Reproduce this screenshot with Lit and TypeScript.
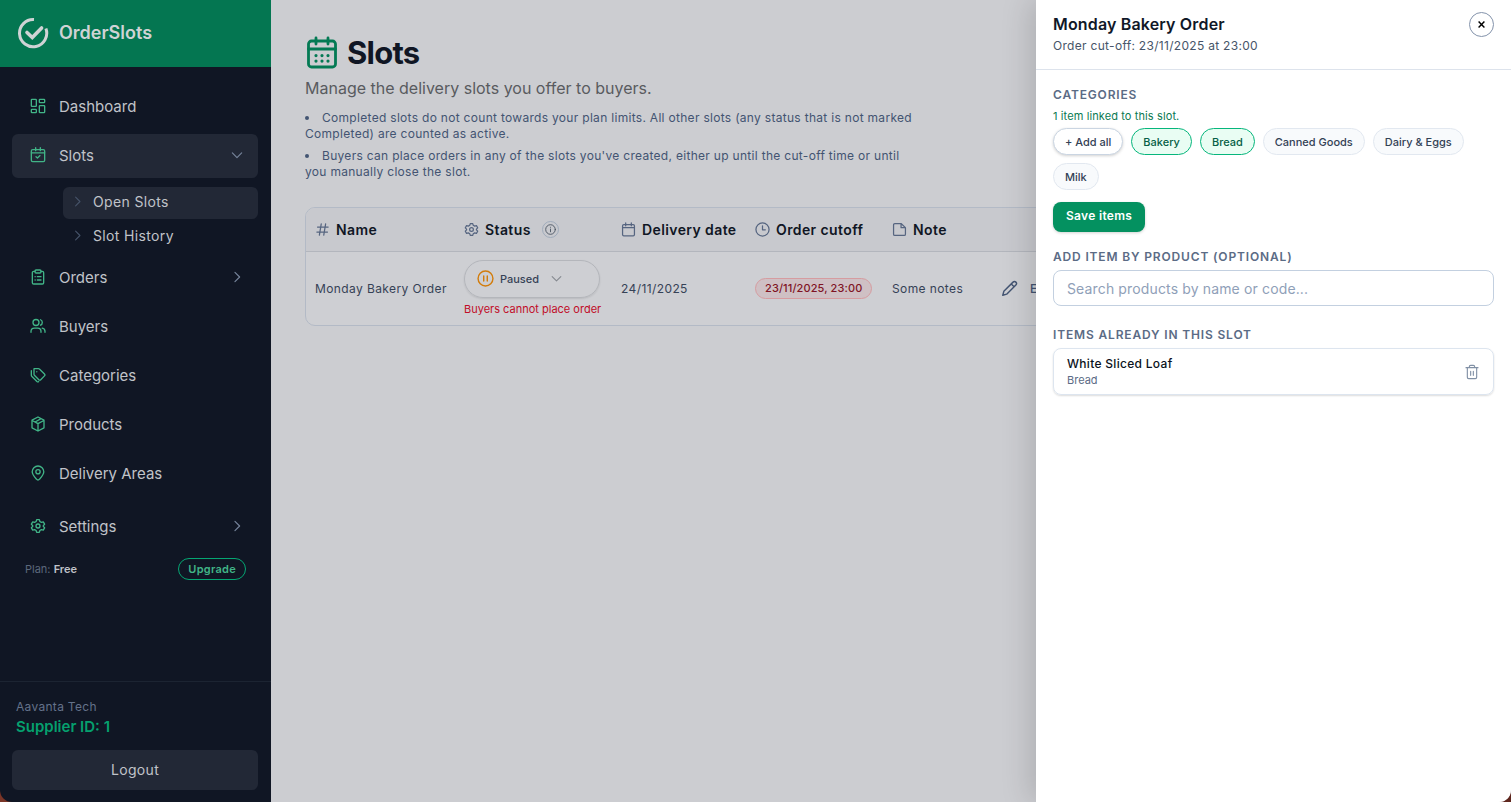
import { LitElement, html, css, svg, TemplateResult, SVGTemplateResult } from "lit";
import { customElement, state } from "lit/decorators.js";
import { classMap } from "lit/directives/class-map.js";

const icon = (box: string, cls: string, body: SVGTemplateResult): TemplateResult =>
  html`<svg class="icon ${cls}" viewBox=${box} aria-hidden="true">${body}</svg>`;

const GEAR = svg`<path d="M10 2.5h4l.8 2.8 2.3 1.3 2.8-.8 2 3.5-2 2.1v1.2l2 2.1-2 3.5-2.8-.8-2.3 1.3-.8 2.8h-4l-.8-2.8-2.3-1.3-2.8.8-2-3.5 2-2.1v-1.2l-2-2.1 2-3.5 2.8.8 2.3-1.3z"/><circle cx="12" cy="12" r="3"/>`;

const icons = {
  dashboard: svg`<rect x="2" y="2" width="7.5" height="10.5" rx="1"/><rect x="2" y="17" width="7.5" height="5" rx="1"/><rect x="14" y="2" width="8" height="5" rx="1"/><rect x="14" y="11.5" width="8" height="10.5" rx="1"/>`,
  slots: svg`<rect x="2" y="4" width="20" height="18" rx="2"/><path d="M2 8.8h20M8.5 1v4.5M15.5 1v4.5M9 14.5l2.2 2 3.8-3.6"/>`,
  orders: svg`<path d="M7.5 3.5H5.500a2 2 0 0 0-2 2v15a2 2 0 0 0 2 2h13a2 2 0 0 0 2-2v-15a2 2 0 0 0-2-2h-2"/><rect x="7.5" y="1.5" width="9" height="4.5" rx="1.6"/><path d="M7.600 11.500h.2M11 11.500h5.500M7.600 16.500h.2M11 16.500h5.500"/>`,
  buyers: svg`<circle cx="9" cy="6.700" r="4.500"/><path d="M1.500 21.500v-1.300a5 5 0 0 1 5-5h5a5 5 0 0 1 5 5v1.300M15.800 2.600a4.500 4.500 0 0 1 0 8.200M18.300 15.200a5 5 0 0 1 4.200 5v1.300"/>`,
  categories: svg`<path d="M6.200 2.500h6.500a2 2 0 0 1 1.400.6l7.600 7.400a2 2 0 0 1 0 2.800l-5.600 5.700a2 2 0 0 1-2.900 0l-6.600-6.600a2 2 0 0 1-.6-1.400V2.700z"/><path d="M2 5.500v6.700a3 3 0 0 0 .9 2.100l7.500 7.400a2.500 2.500 0 0 0 2.600.4M10.200 7v.1"/>`,
  products: svg`<path d="M12 1.500l9 4.800v11.400l-9 4.800-9-4.800V6.300zM3.300 6.700L12 11.500l8.700-4.800M12 11.500v11M16.600 4l-9 5"/>`,
  areas: svg`<path d="M12 22.500c-1 0-1.700-.6-2.300-1.300C6.600 17.800 3.300 14.300 3.300 10.200a8.700 8.700 0 0 1 17.400 0c0 4.100-3.300 7.600-6.400 11-.6.700-1.300 1.300-2.300 1.300z"/><circle cx="12" cy="10.200" r="3.200"/>`,
  settings: GEAR,
  down: svg`<path d="M4 8.500l8 8 8-8"/>`,
  right: svg`<path d="M8.500 4l8 8-8 8"/>`,
};

interface NavItem {
  label: string;
  icon: keyof typeof icons;
  arrow?: "down" | "right";
  children?: string[];
  spaced?: boolean;
}

const NAV: NavItem[] = [
  { label: "Dashboard", icon: "dashboard" },
  { label: "Slots", icon: "slots", arrow: "down", children: ["Open Slots", "Slot History"] },
  { label: "Orders", icon: "orders", arrow: "right" },
  { label: "Buyers", icon: "buyers" },
  { label: "Categories", icon: "categories" },
  { label: "Products", icon: "products" },
  { label: "Delivery Areas", icon: "areas" },
  { label: "Settings", icon: "settings", arrow: "right", spaced: true },
];

const shared = css`
  * { box-sizing: border-box; }
  h1, h2, h3, p, ul { margin: 0; padding: 0; }
  a { color: inherit; text-decoration: none; }
  button, input, select { font: inherit; color: inherit; margin: 0; }
  button { cursor: pointer; }
  .icon {
    display: block;
    flex: none;
    width: 16px;
    height: 16px;
    fill: none;
    stroke: currentColor;
    stroke-width: 2;
    stroke-linecap: round;
    stroke-linejoin: round;
  }
`;

@customElement("side-nav")
class SideNav extends LitElement {
  static styles = [shared, css`
    :host {
      display: flex;
      flex-direction: column;
      background: #101624;
      color: #c0c3c9;
    }
    .brand {
      display: flex;
      align-items: center;
      gap: 10px;
      height: 67px;
      padding: 0 17px 2px;
      background: #047651;
      color: #cfd3d5;
      font-size: 18px;
      font-weight: 600;
    }
    .logo { width: 32px; height: 32px; stroke-width: 3; }
    nav { display: flex; flex-direction: column; gap: 5px; padding: 18px 13px 0 12px; }
    .item {
      display: flex;
      align-items: center;
      gap: 13px;
      height: 44px;
      padding: 0 14px 2px 18px;
      border-radius: 6px;
      font-size: 15px;
    }
    .item .icon { color: #41b487; }
    .item .arrow { width: 14px; height: 14px; margin-left: auto; color: #76849b; }
    .spaced { margin-top: 4px; }
    .active, .sub-active { background: #222836; }
    .sub { display: flex; flex-direction: column; gap: 2px; padding: 4px 0 0 51px; margin-bottom: -2px; }
    .sub-item {
      display: flex;
      align-items: center;
      gap: 9px;
      height: 32px;
      padding: 0 8px 3px;
      border-radius: 6px;
      font-size: 14px;
      letter-spacing: 0.025em;
    }
    .sub-item .icon { width: 13px; height: 13px; color: #465369; }
    .plan {
      display: flex;
      align-items: center;
      justify-content: space-between;
      padding: 9px 25px;
      font-size: 11px;
      color: #5c687c;
    }
    .plan strong { color: #c0c3c9; font-weight: 600; }
    .upgrade {
      height: 22px;
      padding: 0 9px;
      border: 1px solid #05a673;
      border-radius: 11px;
      color: #41b487;
      font-weight: 600;
      letter-spacing: 0.025em;
      line-height: 20px;
    }
    .account { margin-top: auto; padding: 16px 13px 12px 12px; border-top: 1px solid #1c2432; }
    .company { padding-left: 4px; font-size: 12px; line-height: 18px; color: #64728a; letter-spacing: 0.025em; }
    .supplier { padding-left: 4px; font-size: 15px; line-height: 22px; font-weight: 600; color: #05a06e; }
    .logout {
      width: 100%;
      height: 40px;
      margin-top: 12px;
      padding: 0 0 2px;
      border: 0;
      border-radius: 6px;
      background: #222836;
      font-size: 14px;
      letter-spacing: 0.025em;
    }
  `];

  render() {
    return html`
      <div class="brand">
        ${icon("0 0 32 32", "logo", svg`<path d="M17 2.600A13.600 13.600 0 1 0 28.900 11.500" stroke-linecap="butt"/><path d="M10 15.500l5.300 5 9.300-9.500" stroke-width="3.600" stroke-linejoin="miter"/>`)}
        <span>OrderSlots</span>
      </div>
      <nav aria-label="Main">
        ${NAV.map((n) => html`
          <a href="#" class=${classMap({ item: true, active: !!n.children, spaced: !!n.spaced })}>
            ${icon("0 0 24 24", "", icons[n.icon])}
            <span>${n.label}</span>
            ${n.arrow ? icon("0 0 24 24", "arrow", icons[n.arrow]) : ""}
          </a>
          ${n.children ? html`<div class="sub">
            ${n.children.map((c, i) => html`
              <a href="#" class=${classMap({ "sub-item": true, "sub-active": i === 0 })}>
                ${icon("0 0 24 24", "", icons.right)}<span>${c}</span>
              </a>`)}
          </div>` : ""}
        `)}
      </nav>
      <div class="plan"><span>Plan: <strong>Free</strong></span><a class="upgrade" href="#">Upgrade</a></div>
      <div class="account">
        <p class="company">Aavanta Tech</p>
        <p class="supplier">Supplier ID: 1</p>
        <button class="logout">Logout</button>
      </div>
    `;
  }
}

@customElement("slots-page")
class SlotsPage extends LitElement {
  static styles = [shared, css`
    :host { display: block; padding: 35px 34px; background: #cccdd1; min-width: 0; }
    .title { display: flex; align-items: center; gap: 8px; color: #101624; }
    .title .icon { width: 34px; height: 34px; color: #047a54; }
    h1 { font-size: 31px; line-height: 36px; font-weight: 700; letter-spacing: -0.025em; }
    .lead { margin-top: 5px; font-size: 16px; line-height: 24px; color: #595b5f; }
    ul {
      display: flex;
      flex-direction: column;
      gap: 6px;
      max-width: 612px;
      margin-top: 10px;
      list-style-position: inside;
      font-size: 12px;
      line-height: 16px;
      letter-spacing: 0.025em;
      color: #435472;
    }
    .frame { margin-top: 27px; border: 1px solid #b3bac6; border-radius: 10px; overflow: hidden; background: #cecfd3; }
    table { width: 100%; border-collapse: collapse; table-layout: fixed; letter-spacing: 0.025em; }
    th { height: 43px; padding: 0 0 0 9px; background: #c8c9ce; border-bottom: 1px solid #b3b6bd; text-align: left; color: #101624; font-size: 14px; font-weight: 600; white-space: nowrap; }
    td { height: 74px; padding: 0 0 0 9px; font-size: 12px; color: #364256; white-space: nowrap; }
    .head { display: flex; align-items: center; gap: 6px; }
    .head .icon { width: 15px; height: 15px; color: #566580; }
    .info { display: grid; place-items: center; width: 17px; height: 17px; margin-left: 5px; padding: 0; border: 1px solid #a0acbc; border-radius: 50%; background: none; }
    .head .info .icon { width: 11px; height: 11px; color: #4b5563; }
    .c-name { width: 149px; }
    .c-status { width: 157px; }
    .c-date { width: 134px; }
    .c-cutoff { width: 137px; }
    .c-note { width: 109px; }
    .status { display: flex; align-items: center; width: 136px; height: 38px; padding: 0 12px; border: 1px solid #b4b6bb; border-radius: 19px; box-shadow: 0 1px 2px #0000001a; letter-spacing: normal; }
    .status .icon { color: #d27c0c; width: 17px; height: 17px; }
    .status .chev { width: 13px; height: 13px; margin-left: 8px; color: #85898f; }
    select { appearance: none; width: 42px; margin-left: 6px; padding: 0; border: 0; background: none; font-size: 11px; font-weight: 500; }
    .warn { margin-top: 3px; font-size: 11px; line-height: 16px; color: #c10d29; letter-spacing: normal; }
    .due { display: inline-block; padding: 0 9px; border: 1px solid #d69ca0; border-radius: 11px; background: #cfc0c4; color: #7f1424; font-size: 11px; line-height: 19px; font-weight: 500; letter-spacing: 0.01em; }
    .actions { display: flex; align-items: center; }
    .actions button { display: flex; align-items: center; gap: 12px; padding: 0; border: 0; background: none; color: #435472; font-weight: 500; }
    .actions .icon { width: 17px; height: 17px; }
  `];

  private head(label: string, body: SVGTemplateResult, extra: unknown = "") {
    return html`<div class="head">${icon("0 0 24 24", "", body)}<span>${label}</span>${extra}</div>`;
  }

  render() {
    const info = html`<button class="info" aria-label="About status">
      ${icon("0 0 24 24", "", svg`<circle cx="12" cy="12" r="10.500"/><path d="M12 11v6M12 7v.2"/>`)}
    </button>`;
    return html`
      <div class="title">
        ${icon("0 0 34 34", "", svg`<g stroke-width="2.800"><rect x="3.500" y="5" width="27" height="26" rx="3"/><path d="M3.500 13h27M11 2v6M23 2v6"/></g><path d="M11 19.500v.1M17 19.500v.1M23 19.500v.1M11 25v.1M17 25v.1M23 25v.1" stroke-width="3.200"/>`)}
        <h1>Slots</h1>
      </div>
      <p class="lead">Manage the delivery slots you offer to buyers.</p>
      <ul>
        <li>Completed slots do not count towards your plan limits. All other slots (any status that is not marked Completed) are counted as active.</li>
        <li>Buyers can place orders in any of the slots you've created, either up until the cut-off time or until you manually close the slot.</li>
      </ul>
      <div class="frame">
        <table>
          <thead>
            <tr>
              <th class="c-name">${this.head("Name", svg`<path d="M4 8h17M3 16h17M10 3L7 21M17 3l-3 18"/>`)}</th>
              <th class="c-status">${this.head("Status", GEAR, info)}</th>
              <th class="c-date">${this.head("Delivery date", svg`<rect x="2.500" y="4" width="19" height="18" rx="2"/><path d="M2.500 9h19M7.500 1.500V6M16.500 1.500V6"/>`)}</th>
              <th class="c-cutoff">${this.head("Order cutoff", svg`<circle cx="12" cy="12" r="10.500"/><path d="M12 6v6.500h4.500"/>`)}</th>
              <th class="c-note">${this.head("Note", svg`<path d="M14.500 2.500H4.500a2 2 0 0 0-2 2v15a2 2 0 0 0 2 2h15a2 2 0 0 0 2-2V9zM14.500 2.500V9h7"/>`)}</th>
              <th></th>
            </tr>
          </thead>
          <tbody>
            <tr>
              <td>Monday Bakery Order</td>
              <td>
                <div class="status">
                  ${icon("0 0 24 24", "", svg`<circle cx="12" cy="12" r="10.500"/><path d="M9.500 8.500v7M14.500 8.500v7"/>`)}
                  <select aria-label="Slot status"><option>Paused</option><option>Open</option><option>Completed</option></select>
                  ${icon("0 0 24 24", "chev", icons.down)}
                </div>
                <p class="warn">Buyers cannot place order</p>
              </td>
              <td>24/11/2025</td>
              <td><span class="due">23/11/2025, 23:00</span></td>
              <td>Some notes</td>
              <td>
                <div class="actions">
                  <button>
                    ${icon("0 0 24 24", "", svg`<path d="M17 3a2.800 2.800 0 0 1 4 4L8 20l-5.500 1.500L4 16zM14.500 5.500l4 4"/>`)}
                    <span>Edit</span>
                  </button>
                </div>
              </td>
            </tr>
          </tbody>
        </table>
      </div>
    `;
  }
}

@customElement("slot-drawer")
class SlotDrawer extends LitElement {
  @state() private selected = ["Bakery", "Bread"];
  private categories = ["Bakery", "Bread", "Canned Goods", "Dairy & Eggs", "Milk"];

  static styles = [shared, css`
    :host { display: block; background: #fff; color: #101828; box-shadow: -6px 0 28px #00000026; }
    header { display: flex; justify-content: space-between; align-items: flex-start; padding: 12px 17px 13px; border-bottom: 1px solid #dde3ec; }
    h2 { font-size: 16px; line-height: 24px; font-weight: 600; letter-spacing: 0.01em; }
    .cutoff { font-size: 12px; line-height: 20px; color: #475569; letter-spacing: 0.025em; }
    .close { display: grid; place-items: center; width: 25px; height: 25px; padding: 0; border: 1px solid #8493ab; border-radius: 50%; background: #fff; color: #000; }
    .close .icon { width: 7px; height: 7px; stroke-width: 5; stroke-linecap: butt; }
    .body { padding: 16px 17px; }
    .label { display: block; font-size: 12px; line-height: 18px; font-weight: 600; color: #5b6b85; letter-spacing: 0.07em; text-transform: uppercase; }
    .hint { margin-top: 4px; font-size: 11px; line-height: 16px; color: #0a7a52; letter-spacing: 0.01em; }
    .chips { display: flex; flex-wrap: wrap; gap: 8px; margin-top: 4px; }
    .chip { height: 27px; padding: 0 11px; border: 1px solid #e2e8f0; border-radius: 14px; background: #f8fafc; color: #334155; font-size: 11px; font-weight: 500; }
    .chip.all { background: #fff; border-color: #cad5e2; box-shadow: 0 1px 3px #0000002e; }
    .chip.on { background: #e9fdf3; border-color: #06b67c; color: #065f46; }
    .save { display: block; height: 30px; margin: 12px 0 16px; padding: 0 13px 3px; border: 0; border-radius: 8px; background: #049160; color: #fff; font-size: 12px; font-weight: 600; letter-spacing: 0.025em; box-shadow: 0 1px 3px #0000002e; }
    .search { display: block; width: 100%; height: 36px; margin: 4px 0 20px; padding: 0 13px; border: 1px solid #c3d0e0; border-radius: 8px; background: #fff; font-size: 14px; letter-spacing: 0.01em; }
    .search::placeholder { color: #8fa0b8; opacity: 1; }
    .card { display: flex; align-items: center; justify-content: space-between; margin-top: 4px; padding: 6px 13px; border: 1px solid #dde5ef; border-radius: 8px; box-shadow: 0 1px 2px #00000024; list-style: none; }
    .name { font-size: 12px; line-height: 18px; font-weight: 500; color: #0b1220; letter-spacing: 0.025em; }
    .kind { font-size: 11px; line-height: 15px; color: #5b6b85; }
    .trash { padding: 0; border: 0; background: none; color: #8190a5; }
  `];

  private toggle(name: string) {
    this.selected = this.selected.includes(name)
      ? this.selected.filter((n) => n !== name)
      : [...this.selected, name];
  }

  render() {
    return html`
      <header>
        <div>
          <h2>Monday Bakery Order</h2>
          <p class="cutoff">Order cut-off: 23/11/2025 at 23:00</p>
        </div>
        <button class="close" aria-label="Close">${icon("0 0 24 24", "", svg`<path d="M2 2l20 20M22 2L2 22"/>`)}</button>
      </header>
      <div class="body">
        <h3 class="label">Categories</h3>
        <p class="hint">1 item linked to this slot.</p>
        <div class="chips">
          <button class="chip all">+ Add all</button>
          ${this.categories.map((c) => html`
            <button class=${classMap({ chip: true, on: this.selected.includes(c) })} @click=${() => this.toggle(c)}>${c}</button>`)}
        </div>
        <button class="save">Save items</button>
        <label class="label" for="product">Add item by product (optional)</label>
        <input class="search" id="product" type="text" placeholder="Search products by name or code..." />
        <h3 class="label">Items already in this slot</h3>
        <ul>
          <li class="card">
            <div><p class="name">White Sliced Loaf</p><p class="kind">Bread</p></div>
            <button class="trash" aria-label="Remove White Sliced Loaf">
              ${icon("0 0 24 24", "", svg`<path d="M3 5.500h18M8 5.500V4a2 2 0 0 1 2-2h4a2 2 0 0 1 2 2v1.500M5 5.500V20a2 2 0 0 0 2 2h10a2 2 0 0 0 2-2V5.500M10 11v6M14 11v6" stroke-width="1.700"/>`)}
            </button>
          </li>
        </ul>
      </div>
    `;
  }
}

@customElement("app-root")
class AppRoot extends LitElement {
  static styles = css`
    :host {
      display: block;
      background: linear-gradient(90deg, #7a3527, #5f261d);
      font-family: Inter, "Liberation Sans", sans-serif;
    }
    .shell {
      position: relative;
      display: grid;
      grid-template-columns: 271px minmax(0, 1fr);
      min-height: 100vh;
      border-radius: 0 0 12px 12px;
      overflow: hidden;
    }
    slot-drawer { position: absolute; top: 0; right: 0; bottom: 0; width: 475px; max-width: 100%; }
  `;

  render() {
    return html`
      <div class="shell">
        <side-nav></side-nav>
        <slots-page></slots-page>
        <slot-drawer role="dialog" aria-label="Monday Bakery Order"></slot-drawer>
      </div>
    `;
  }
}
